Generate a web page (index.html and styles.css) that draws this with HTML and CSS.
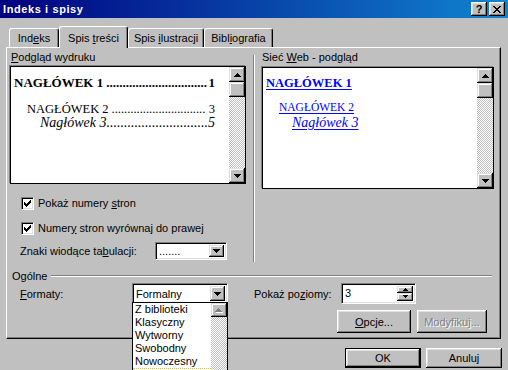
FILE: index.html
```html
<!DOCTYPE html>
<html lang="pl">
<head>
<meta charset="utf-8">
<title>Indeks i spisy</title>
<link rel="stylesheet" href="styles.css">
</head>
<body>
<div class="dialog">
  <div class="titlebar">
    <span class="title">Indeks i spisy</span>
    <div class="tb-buttons">
      <span class="tb-btn help">?</span>
      <span class="tb-btn"><svg width="8" height="7" viewBox="0 0 8 7" shape-rendering="crispEdges"><path d="M0 0h2v1H0zM6 0h2v1H6zM1 1h2v1H1zM5 1h2v1H5zM2 2h4v1H2zM3 3h2v1H3zM2 4h4v1H2zM1 5h2v1H1zM5 5h2v1H5zM0 6h2v1H0zM6 6h2v1H6z"/></svg></span>
    </div>
  </div>

  <div class="tabs">
    <div class="tab t1"><span>Ind<u>e</u>ks</span></div>
    <div class="tab t2 active"><span>Spis <u>t</u>reści</span></div>
    <div class="tab t3"><span>Spis <u>i</u>lustracji</span></div>
    <div class="tab t4"><span>Bibl<u>i</u>ografia</span></div>
  </div>

  <div class="panel">
    <div class="top">
      <div class="col-left">
        <div class="label lbl-left"><u>P</u>odgląd wydruku</div>
        <div class="preview preview-left">
          <div class="pv-body">
            <div class="toc toc1"><span>NAGŁÓWEK 1</span><span class="leader">...............................</span><span class="num">1</span></div>
            <div class="toc toc2"><span>NAGŁÓWEK 2</span><span class="leader">..............................</span><span class="num gap">3</span></div>
            <div class="toc toc3"><span>Nagłówek 3</span><span class="leader nogap">.............................</span><span class="num">5</span></div>
          </div>
          <div class="vscroll">
            <div class="sb-btn"><svg width="7" height="4" viewBox="0 0 7 4" shape-rendering="crispEdges"><path d="M3 0h1v1H3zM2 1h3v1H2zM1 2h5v1H1zM0 3h7v1H0z"/></svg></div>
            <div class="sb-btn thumb"></div>
            <div class="sb-track"></div>
            <div class="sb-btn"><svg width="7" height="4" viewBox="0 0 7 4" shape-rendering="crispEdges"><path d="M0 0h7v1H0zM1 1h5v1H1zM2 2h3v1H2zM3 3h1v1H3z"/></svg></div>
          </div>
        </div>

        <div class="check-row first">
          <span class="checkbox"><svg width="7" height="7" viewBox="0 0 7 7" shape-rendering="crispEdges"><path d="M0 2h1v3H0zM1 3h1v3H1zM2 4h1v3H2zM3 3h1v3H3zM4 2h1v3H4zM5 1h1v3H5zM6 0h1v3H6z"/></svg></span>
          <span class="check-label">Pokaż numery <u>s</u>tron</span>
        </div>
        <div class="check-row second">
          <span class="checkbox"><svg width="7" height="7" viewBox="0 0 7 7" shape-rendering="crispEdges"><path d="M0 2h1v3H0zM1 3h1v3H1zM2 4h1v3H2zM3 3h1v3H3zM4 2h1v3H4zM5 1h1v3H5zM6 0h1v3H6z"/></svg></span>
          <span class="check-label">Numer<u>y</u> stron wyrównaj do prawej</span>
        </div>
        <div class="leader-row">
          <span class="leader-label">Znaki wiodące ta<u>b</u>ulacji:</span>
          <div class="combo combo-small">
            <span class="combo-text">.......</span>
            <span class="combo-btn"><svg width="7" height="4" viewBox="0 0 7 4" shape-rendering="crispEdges"><path d="M0 0h7v1H0zM1 1h5v1H1zM2 2h3v1H2zM3 3h1v1H3z"/></svg></span>
          </div>
        </div>
      </div>

      <div class="sep"></div>

      <div class="col-right">
        <div class="label lbl-right">Sieć <u>W</u>eb - podgląd</div>
        <div class="preview preview-right">
          <div class="pv-body web">
            <div class="web1">NAGŁÓWEK 1</div>
            <div class="web2">NAGŁÓWEK 2</div>
            <div class="web3">Nagłówek 3</div>
          </div>
          <div class="vscroll">
            <div class="sb-btn"><svg width="7" height="4" viewBox="0 0 7 4" shape-rendering="crispEdges"><path d="M3 0h1v1H3zM2 1h3v1H2zM1 2h5v1H1zM0 3h7v1H0z"/></svg></div>
            <div class="sb-btn thumb"></div>
            <div class="sb-track"></div>
            <div class="sb-btn"><svg width="7" height="4" viewBox="0 0 7 4" shape-rendering="crispEdges"><path d="M0 0h7v1H0zM1 1h5v1H1zM2 2h3v1H2zM3 3h1v1H3z"/></svg></div>
          </div>
        </div>
      </div>
    </div>

    <div class="group-head">
      <span>Ogólne</span>
      <span class="etched"></span>
    </div>

    <div class="formats-row">
      <span class="formats-label"><u>F</u>ormaty:</span>
      <div class="combo combo-formats">
        <span class="combo-text">Formalny</span>
        <span class="combo-btn"><svg width="7" height="4" viewBox="0 0 7 4" shape-rendering="crispEdges"><path d="M0 0h7v1H0zM1 1h5v1H1zM2 2h3v1H2zM3 3h1v1H3z"/></svg></span>
        <div class="dropdown">
          <div class="dd-items">
            <div class="dd-item">Z biblioteki</div>
            <div class="dd-item">Klasyczny</div>
            <div class="dd-item">Wytworny</div>
            <div class="dd-item">Swobodny</div>
            <div class="dd-item">Nowoczesny</div>
            <div class="dd-focus"></div>
          </div>
          <div class="dd-scroll">
            <div class="sb-btn small disabled"><svg width="8" height="5" viewBox="0 0 8 5" shape-rendering="crispEdges"><path fill="#fff" d="M4 1h1v1H4zM3 2h3v1H3zM2 3h5v1H2zM1 4h7v1H1z"/><path fill="#808080" d="M3 0h1v1H3zM2 1h3v1H2zM1 2h5v1H1zM0 3h7v1H0z"/></svg></div>
            <div class="sb-track"></div>
          </div>
        </div>
      </div>
      <span class="levels-label">Pokaż po<u>z</u>iomy:</span>
      <div class="spin">
        <span class="spin-text">3</span>
        <div class="spin-btns">
          <span class="spin-btn"><svg width="5" height="3" viewBox="0 0 5 3" shape-rendering="crispEdges"><path d="M2 0h1v1H2zM1 1h3v1H1zM0 2h5v1H0z"/></svg></span>
          <span class="spin-btn"><svg width="5" height="3" viewBox="0 0 5 3" shape-rendering="crispEdges"><path d="M0 0h5v1H0zM1 1h3v1H1zM2 2h1v1H2z"/></svg></span>
        </div>
      </div>
    </div>

    <div class="panel-buttons">
      <span class="btn btn-opcje"><span><u>O</u>pcje...</span></span>
      <span class="btn btn-mod disabled-text"><span>Modyfikuj...</span></span>
    </div>
  </div>

  <div class="footer">
    <span class="btn btn-ok default"><span>OK</span></span>
    <span class="btn btn-cancel"><span>Anuluj</span></span>
  </div>
</div>
</body>
</html>
```

FILE: styles.css
```css
* { box-sizing: border-box; }
html, body { margin: 0; padding: 0; }
body {
  width: 508px;
  height: 370px;
  overflow: hidden;
  background: #c0c0c0;
  font-family: "Liberation Sans", Arial, sans-serif;
  font-size: 11px;
  color: #000;
}
u { text-decoration: underline; text-underline-offset: 1px; }
.dialog { width: 508px; height: 370px; }

/* title bar */
.titlebar {
  height: 18px;
  display: flex;
  align-items: center;
  justify-content: space-between;
  padding: 0 3px;
  background: linear-gradient(to right, #000080, #1084d0);
}
.title { color: #fff; font-weight: bold; font-size: 11px; letter-spacing: 0.6px; }
.tb-buttons { display: flex; gap: 2px; }
.tb-btn {
  width: 16px;
  height: 14px;
  background: #c0c0c0;
  box-shadow: inset -1px -1px #000, inset 1px 1px #fff, inset -2px -2px #808080, inset 2px 2px #dfdfdf;
  display: flex;
  align-items: center;
  justify-content: center;
  font-weight: bold;
  font-size: 11px;
  line-height: 14px;
}

/* tabs */
.tabs {
  position: relative;
  z-index: 2;
  display: flex;
  align-items: flex-end;
  height: 22px;
  margin-top: 8px;
  padding-left: 9px;
}
.tab {
  height: 19px;
  margin-bottom: 1px;
  background: #c0c0c0;
  border-top: 1px solid #fff;
  border-left: 1px solid #fff;
  border-right: 1px solid #000;
  border-radius: 3px 3px 0 0;
  box-shadow: inset -1px 0 #808080;
  display: flex;
  align-items: center;
  justify-content: center;
  line-height: 13px;
  white-space: nowrap;
}
.tab.active { height: 22px; margin-bottom: 0; padding-top: 1px; }
.t1 { width: 50px; }
.t2 { width: 69px; }
.t3 { width: 76px; }
.t4 { width: 69px; }

/* panel */
.panel {
  position: relative;
  z-index: 1;
  margin-top: -1px;
  margin-left: 6px;
  width: 495px;
  height: 292px;
  border: 1px solid;
  border-color: #fff #000 #000 #fff;
  box-shadow: inset -1px -1px #808080;
}
.top { display: flex; height: 215px; }
.col-left { width: 246px; padding-top: 3px; }
.col-right { flex: 1; padding-top: 3px; }
.label { height: 13px; line-height: 13px; }
.lbl-left { margin-left: 4px; }
.lbl-right { margin-left: 7px; }
.sep {
  width: 2px;
  height: 207px;
  margin-top: 7px;
  border-left: 1px solid #808080;
  border-right: 1px solid #fff;
}

/* preview boxes */
.preview {
  display: flex;
  background: #fff;
  border: 1px solid #000;
  box-shadow: -1px -1px 0 #808080;
}
.preview-left { width: 236px; height: 118px; margin: 2px 0 0 3px; }
.preview-right { width: 232px; height: 122px; margin: 3px 0 0 7px; }
.pv-body { flex: 1; min-width: 0; }
.preview-left .pv-body { padding: 8px 14px 0 3px; }

.toc {
  display: flex;
  font-family: "Liberation Serif", "Times New Roman", serif;
  white-space: nowrap;
}
.toc span { flex: none; }
.toc .leader { margin-left: 3px; }
.toc .leader.nogap { margin-left: 0; }
.toc .num { margin-left: auto; }
.toc .num.gap { padding-left: 3px; }
.toc1 { font-weight: bold; font-size: 13px; line-height: 16px; }
.toc2 { font-size: 12.5px; line-height: 14px; margin-top: 11px; padding-left: 13px; }
.toc3 { font-size: 14px; line-height: 14px; font-style: italic; padding-left: 26px; }

.web {
  padding: 7px 0 0 3px;
  font-family: "Liberation Serif", "Times New Roman", serif;
  color: #0000ff;
  white-space: nowrap;
}
.web div { text-decoration: underline; text-underline-offset: 2px; width: max-content; }
.web1 { font-weight: bold; font-size: 12.5px; line-height: 16px; }
.web2 { font-size: 11.5px; line-height: 14px; margin: 9px 0 0 13px; }
.web3 { font-size: 14px; line-height: 14px; font-style: italic; margin: 2px 0 0 26px; }

/* scrollbars */
.vscroll { width: 16px; display: flex; flex-direction: column; }
.sb-btn {
  flex: none;
  height: 15px;
  background: #c0c0c0;
  box-shadow: inset -1px -1px #000, inset 1px 1px #dfdfdf, inset -2px -2px #808080, inset 2px 2px #fff;
  display: flex;
  align-items: center;
  justify-content: center;
}
.sb-btn svg { display: block; }
.sb-btn.small { height: 14px; }
.sb-track {
  flex: 1;
  background: repeating-conic-gradient(#c0c0c0 0 25%, #fff 0 50%) 0 0 / 2px 2px;
}

/* checkboxes */
.check-row { display: flex; align-items: center; height: 13px; margin-left: 14px; }
.check-row.first { margin-top: 13px; }
.check-row.second { margin-top: 12px; }
.checkbox {
  width: 13px;
  height: 13px;
  flex: none;
  background: #fff;
  border: 1px solid;
  border-color: #808080 #fff #fff #808080;
  box-shadow: inset 1px 1px #000, inset -1px -1px #dfdfdf;
  display: flex;
  align-items: center;
  justify-content: center;
}
.checkbox svg { display: block; }
.check-label { margin-left: 4px; line-height: 13px; }

.leader-row { display: flex; align-items: center; margin: 7px 0 0 13px; height: 18px; }
.leader-label { width: 135px; }

/* combo boxes */
.combo {
  position: relative;
  display: flex;
  align-items: stretch;
  background: #fff;
  border: 1px solid;
  border-color: #808080 #fff #fff #808080;
  box-shadow: inset 1px 1px #000, inset -1px -1px #dfdfdf;
  padding: 2px;
}
.combo-small { width: 72px; height: 18px; }
.combo-formats { width: 96px; height: 21px; }
.combo-text { flex: 1; padding-left: 1px; display: flex; align-items: center; }
.combo-btn {
  width: 15px;
  background: #c0c0c0;
  box-shadow: inset -1px -1px #000, inset 1px 1px #dfdfdf, inset -2px -2px #808080, inset 2px 2px #fff;
  display: flex;
  align-items: center;
  justify-content: center;
}
.combo-btn svg { display: block; }

/* general section */
.group-head { display: flex; align-items: center; height: 13px; margin-top: 6px; padding-left: 5px; }
.etched {
  flex: 1;
  height: 2px;
  margin: 0 8px 0 4px;
  border-top: 1px solid #808080;
  border-bottom: 1px solid #fff;
}
.formats-row { display: flex; align-items: center; margin: 1px 0 0 13px; height: 21px; }
.formats-label { width: 112px; }
.levels-label { width: 87px; margin-left: 26px; }

.dropdown {
  position: absolute;
  left: -1px;
  top: 100%;
  margin-top: -1px;
  width: 96px;
  height: 80px;
  background: #fff;
  border: 1px solid #000;
  display: flex;
  z-index: 5;
}
.dd-items { flex: 1; padding-left: 2px; overflow: hidden; }
.dd-item { height: 13px; line-height: 13px; white-space: nowrap; }
.dd-focus { height: 13px; margin-left: -2px; border-top: 1px dotted #c8c060; }
.dd-scroll { width: 16px; display: flex; flex-direction: column; }

.spin {
  position: relative;
  display: flex;
  width: 75px;
  height: 21px;
  margin-top: -1px;
  background: #fff;
  border: 1px solid;
  border-color: #808080 #fff #fff #808080;
  box-shadow: inset 1px 1px #000, inset -1px -1px #dfdfdf;
  padding: 2px;
}
.spin-text { flex: 1; padding-left: 1px; display: flex; align-items: center; }
.spin-btns { width: 16px; display: flex; flex-direction: column; }
.spin-btn {
  flex: 1;
  background: #c0c0c0;
  box-shadow: inset -1px -1px #000, inset 1px 1px #dfdfdf, inset -2px -2px #808080, inset 2px 2px #fff;
  display: flex;
  align-items: center;
  justify-content: center;
}
.spin-btn svg { display: block; }

/* buttons */
.panel-buttons { display: flex; justify-content: flex-end; gap: 6px; margin-top: 6px; padding-right: 13px; }
.btn {
  height: 23px;
  background: #c0c0c0;
  box-shadow: inset -1px -1px #000, inset 1px 1px #fff, inset -2px -2px #808080, inset 2px 2px #dfdfdf;
  display: flex;
  align-items: center;
  justify-content: center;
}
.btn-opcje { width: 74px; }
.btn-mod { width: 70px; }
.disabled-text { color: #808080; text-shadow: 1px 1px 0 #fff; }

.footer { display: flex; justify-content: flex-end; gap: 5px; margin-top: 9px; padding-right: 6px; }
.footer .btn { width: 76px; height: 20px; }
.btn.default { border: 1px solid #000; }
```
